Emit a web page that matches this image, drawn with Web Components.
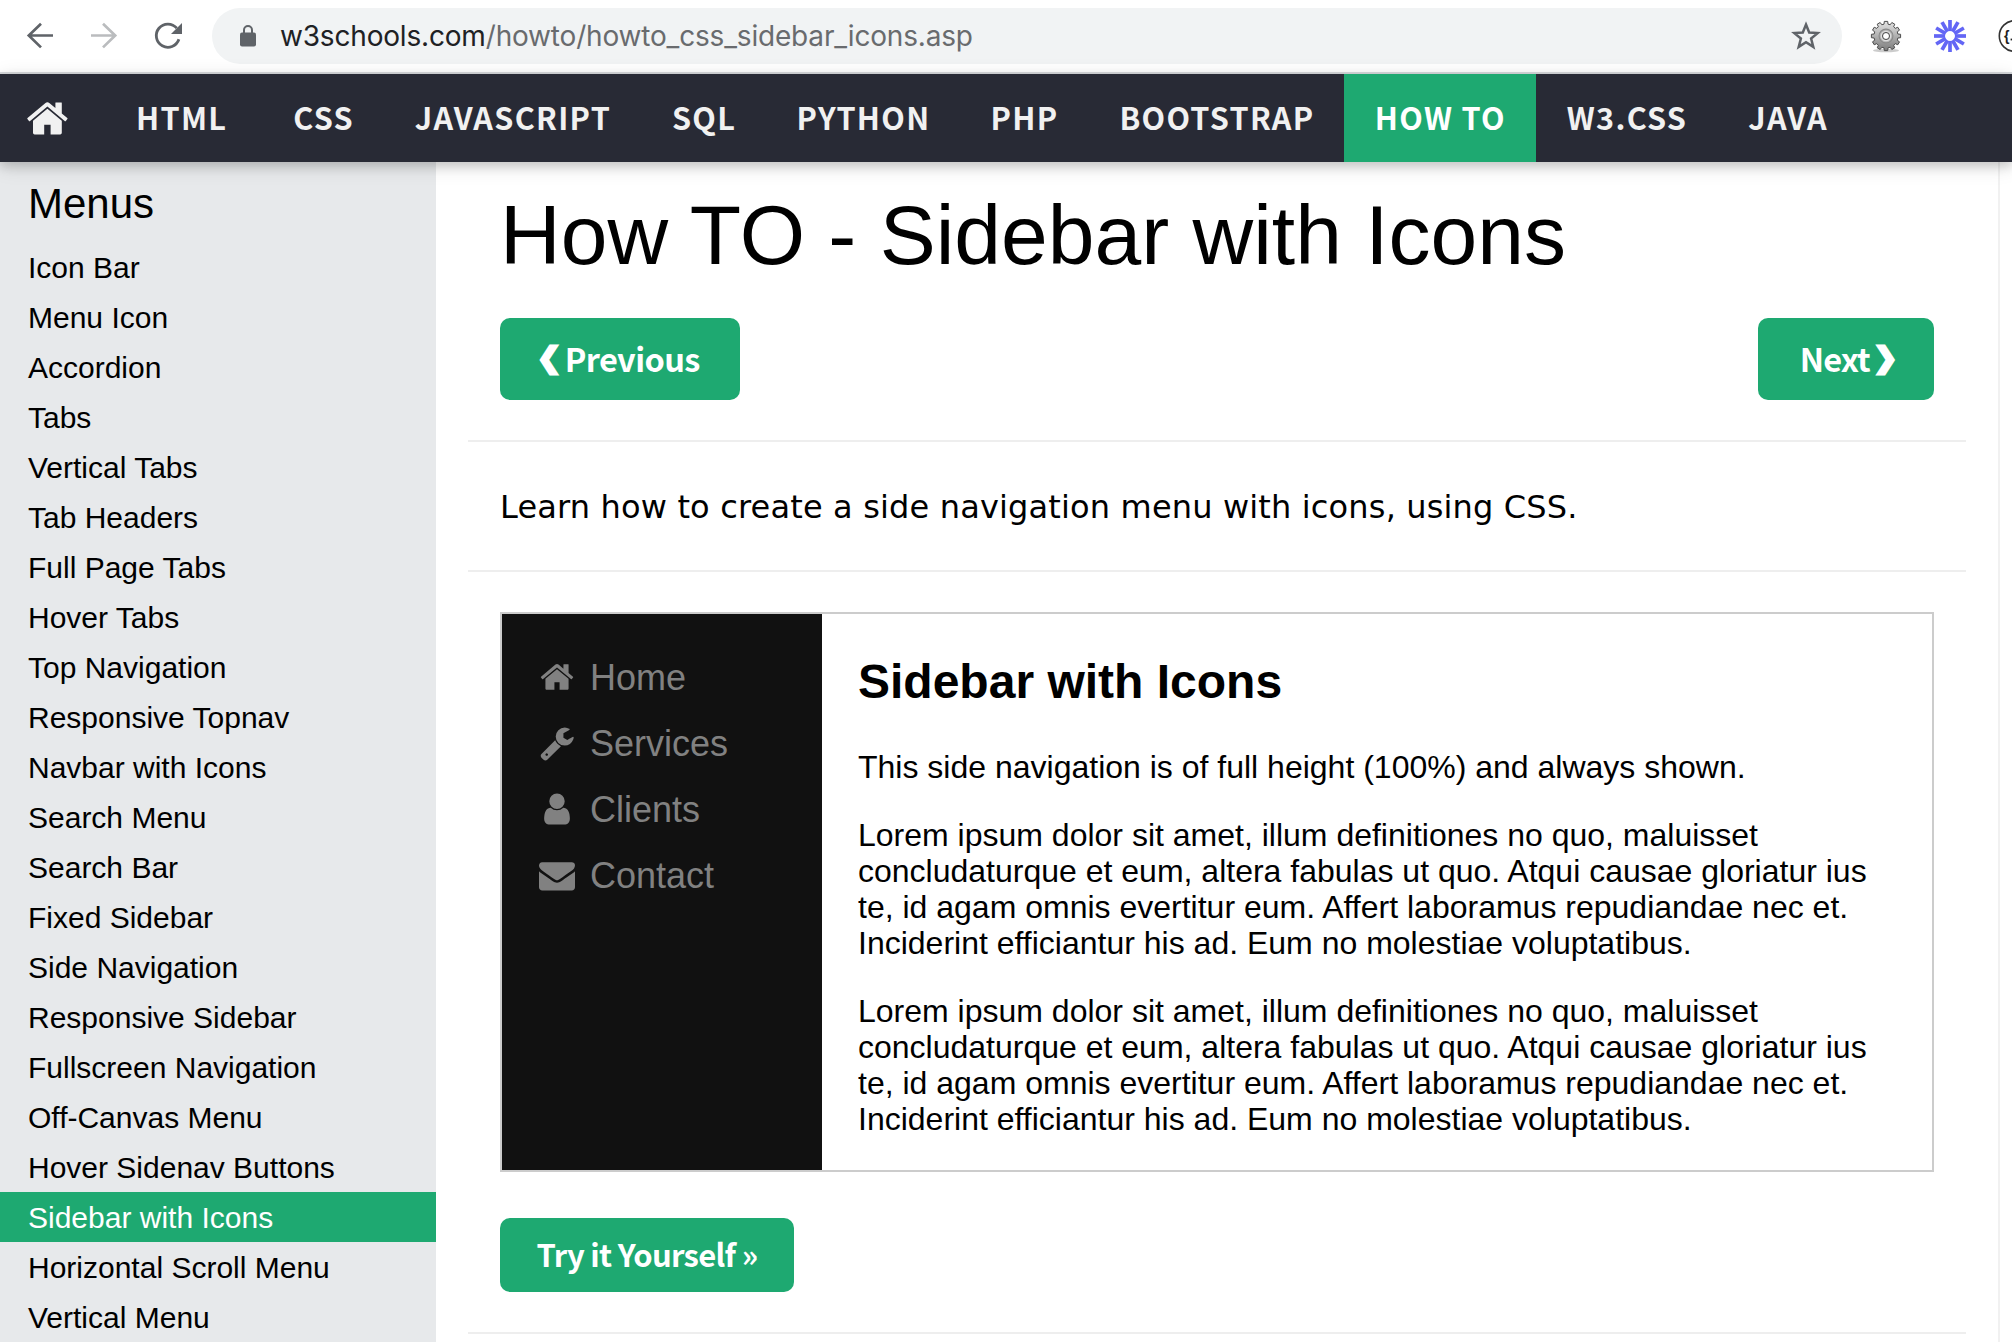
<!DOCTYPE html>
<html lang="en">
<head>
<meta charset="utf-8">
<title>How To Create a Sidebar With Icons</title>
<style>
html, body { margin: 0; height: 1342px; overflow: hidden; background: #fff; }
body { font-family: "Liberation Sans", Arial, sans-serif; color: #000; width: 2012px; }
</style>
</head>
<body>
<page-shell></page-shell>
<script>
const define = (name, html, setup) => customElements.define(name, class extends HTMLElement {
  constructor() {
    super();
    this.attachShadow({ mode: 'open' }).innerHTML = html;
  }
  connectedCallback() { if (setup && !this.ready) { this.ready = true; setup(this, this.shadowRoot); } }
});

const ICONS = {
  home: 'M1472 992v480q0 26-19 45t-45 19h-384v-384h-256v384h-384q-26 0-45-19t-19-45v-480q0-1 .5-3t.5-3l575-474 575 474q1 2 1 6zm223-69l-62 74q-8 9-21 11h-3q-13 0-21-7l-692-577-692 577q-12 8-24 7-13-2-21-11l-62-74q-8-10-7-23.5t11-21.5l719-599q32-26 76-26t76 26l244 204v-195q0-14 9-23t23-9h192q14 0 23 9t9 23v408l219 182q10 8 11 21.5t-7 23.5z',
  wrench: 'M448 1472q0-26-19-45t-45-19-45 19-19 45 19 45 45 19 45-19 19-45zm644-420l-682 682q-37 37-90 37-52 0-91-37l-106-108q-38-36-38-90 0-53 38-91l681-681q39 98 114.5 173.5t173.5 114.5zm634-435q0 39-23 106-47 134-164.5 217.5t-258.5 83.5q-185 0-316.5-131.5t-131.5-316.5 131.5-316.5 316.5-131.5q58 0 121.5 16.5t107.5 46.5q16 11 16 28t-16 28l-293 169v224l193 107q5-3 79-48.5t135.5-81 70.5-35.5q15 0 23.5 10t8.5 25z',
  user: 'M1536 1399q0 109-62.5 187t-150.5 78h-854q-88 0-150.5-78t-62.5-187q0-85 8.5-160.5t31.5-152 58.5-131 94-89 134.5-34.5q131 128 313 128t313-128q76 0 134.5 34.5t94 89 58.5 131 31.5 152 8.5 160.5zm-256-887q0 159-112.5 271.5t-271.5 112.5-271.5-112.5-112.5-271.5 112.5-271.5 271.5-112.5 271.5 112.5 112.5 271.5z',
  envelope: 'M1792 710v794q0 66-47 113t-113 47h-1472q-66 0-113-47t-47-113v-794q44 49 101 87 362 246 497 345 57 42 92.5 65.5t94.5 48 110 24.5h2q51 0 110-24.5t94.5-48 92.5-65.5q170-123 498-345 57-39 100-87zm0-294q0 79-49 151t-122 123q-376 261-468 325-10 7-42.5 31t-54 38.5-52 32.5-57.5 27-50 9h-2q-23 0-50-9t-57.5-27-52-32.5-54-38.5-42.5-31q-91-64-262-182.5t-205-142.5q-62-42-117-115.5t-55-136.5q0-78 41.5-130t118.5-52h1472q65 0 112.5 47t47.5 113z'
};

define('fa-icon', `<style>:host{display:block;flex:none;width:1em;height:1em}svg{display:block;width:100%;height:100%;overflow:visible}</style>
<svg viewBox="0 0 1792 1792" fill="currentColor"><path/></svg>`,
  (el, root) => root.querySelector('path').setAttribute('d', ICONS[el.getAttribute('name')] || ''));

define('browser-toolbar', `<style>
:host{display:flex;height:72px;background:#fff;border-bottom:2px solid #d9dbde;align-items:center;overflow:hidden;color:#5f6368}
svg{display:block;flex:none;overflow:visible}
.nav{display:flex;width:212px;flex:none;padding-left:24px;box-sizing:border-box;gap:32px}
.pill{display:flex;align-items:center;flex:none;box-sizing:border-box;width:1630px;height:56px;border-radius:28px;background:#f1f3f4;padding:0 20px 0 28px}
.url{flex:1;margin-left:24px;font:400 28px/56px Inter,"Liberation Sans",sans-serif;color:#696b6e;letter-spacing:-.18px;white-space:pre}
.url b{font-weight:400;color:#202124}
.ext{display:flex;align-items:center;flex:none;padding-left:26px;gap:30px}
</style>
<div class="nav">
<svg width="32" height="32" viewBox="0 0 32 32" fill="none" stroke="#5f6368" stroke-width="2.7"><path d="M29 15.5H5M17 3.8 4.8 15.5 17 27.4"/></svg>
<svg width="32" height="32" viewBox="0 0 32 32" fill="none" stroke="#babcbe" stroke-width="2.7"><path d="M3 15.5h24M15 3.8 27.2 15.5 15 27.4"/></svg>
<svg width="32" height="32" viewBox="0 0 32 32"><path d="M26.9 19.3A11.6 11.6 0 1 1 24.8 8.2" fill="none" stroke="#5f6368" stroke-width="2.8"/><path d="M30 3v11H19z" fill="#5f6368"/></svg>
</div>
<div class="pill">
<svg width="16" height="22" viewBox="0 0 16 22"><rect y="7.5" width="16" height="14" rx="2" fill="#5f6368"/><path d="M4 9V5a4 4 0 0 1 8 0v4" fill="none" stroke="#5f6368" stroke-width="2"/></svg>
<div class="url"><b>w3schools.com</b>/howto/howto_css_sidebar_icons.asp</div>
<svg width="32" height="32" viewBox="0 0 32 32"><path d="M16 4.5l3.2 8 8.5.6-6.6 5.4 2.2 8.4-7.3-4.7-7.3 4.7 2.2-8.4-6.6-5.4 8.5-.6z" fill="none" stroke="#5f6368" stroke-width="2.5"/></svg>
</div>
<div class="ext">
<svg class="gear" width="36" height="36" viewBox="-18 -18 36 36"><defs><linearGradient id="g" x1="0" y1="0" x2="0" y2="1"><stop offset="0" stop-color="#e4e4e4"/><stop offset="1" stop-color="#7c7c7c"/></linearGradient></defs><ellipse cy="14.5" rx="13" ry="1.8" fill="#ccc"/><g class="teeth"></g><circle r="6.9" fill="#b4b4b4" stroke="#8a8a8a" stroke-width="1.2"/><circle r="4.6" fill="none" stroke="#ddd" stroke-width="1.4"/><circle r="3.5" fill="#fff" stroke="#444"/></svg>
<svg class="burst" width="32" height="32" viewBox="-16 -16 32 32" stroke="#6366f5" stroke-width="3.7"></svg>
<svg width="16" height="36" viewBox="0 0 16 36"><circle cx="18.7" cy="18" r="15.4" fill="#fff" stroke="#333" stroke-width="1.6"/><text x="8" y="22.5" font-family="Liberation Sans, sans-serif" font-size="14" font-weight="700" fill="#222">{</text><rect x="14.6" y="20.6" width="1.8" height="1.8" fill="#222"/></svg>
</div>`, (el, root) => {
  let rays = '';
  for (let i = 0; i < 12; i++) rays += `<path d="M0-4.9V-16" transform="rotate(${i * 30})"/>`;
  root.querySelector('.burst').innerHTML = rays;
  let d = '';
  const n = 12, step = Math.PI * 2 / n;
  for (let i = 0; i < n; i++) {
    const a = i * step - Math.PI / 2;
    for (const [o, r] of [[-.32, 12], [-.22, 14.7], [.22, 14.7], [.32, 12]])
      d += (d ? 'L' : 'M') + (Math.cos(a + o * step) * r).toFixed(2) + ' ' + (Math.sin(a + o * step) * r).toFixed(2);
  }
  root.querySelector('.teeth').innerHTML = `<path d="${d}Z" fill="url(#g)" stroke="#4c4c4c" stroke-width="1"/>`;
});

define('nav-item', `<style>
:host{display:flex;align-items:center;flex:none;height:88px;padding:0 30px 2px 32px;box-sizing:border-box;white-space:nowrap}
:host([active]){background:#1ea971;color:#fff;width:192px;padding-left:31px}
</style><slot></slot>`);

define('top-nav', `<style>
:host{display:flex;position:relative;z-index:2;height:88px;background:#282a35;color:#f1f1f1;box-shadow:0 4px 10px rgba(0,0,0,.16),0 4px 20px rgba(0,0,0,.12);font:700 30.6px/86px "Noto Sans CJK SC",sans-serif;letter-spacing:1.3px}
.home{display:flex;align-items:center;width:104px;padding-left:24.5px;box-sizing:border-box;font-size:44.8px}
.a{margin-right:4px}.b{margin-right:-1.2px}.c{margin-right:-1.2px}.d{margin-right:-1.6px}.e{margin-right:-1.9px}.f{margin-right:-.9px}.g{margin-right:-.7px}.h{margin:0 -1px 0 -1px}
</style>
<div class="home"><fa-icon name="home"></fa-icon></div>
<nav-item class="a">HTML</nav-item><nav-item class="b">CSS</nav-item><nav-item class="c">JAVASCRIPT</nav-item><nav-item class="d">SQL</nav-item><nav-item class="e">PYTHON</nav-item><nav-item class="f">PHP</nav-item><nav-item class="g">BOOTSTRAP</nav-item><nav-item active>HOW TO</nav-item><nav-item class="h">W3.CSS</nav-item><nav-item>JAVA</nav-item>`);

define('side-link', `<style>
:host{display:block;height:50px;line-height:52px;padding-left:28px;white-space:nowrap}
:host([active]){background:#1ea971;color:#fff}
</style><slot></slot>`);

define('side-menu', `<style>
:host{display:block;flex:none;width:436px;background:#e7e9eb;font-size:30px}
h2{margin:0;height:80px;line-height:83px;padding-left:28px;font-size:42px;font-weight:400}
</style><h2>Menus</h2><slot></slot>`);

define('green-button', `<style>
:host{display:flex;align-items:center;justify-content:center;flex:none;box-sizing:border-box;background:#1ea971;color:#fff;border-radius:10px;font:700 32.5px/1 "Noto Sans CJK SC",sans-serif;white-space:pre}
</style><slot></slot>`);

define('rule-line', `<style>:host{display:block;flex:none;height:2px;background:#eee;margin:0 -32px}</style>`);

define('demo-link', `<style>
:host{display:flex;align-items:center;height:66px;line-height:42px;font-size:36px;color:#818181}
.icon{margin:-2px 15px 0 5px}
</style><span class="icon"></span><slot></slot>`, (el, root) => {
  const icon = document.createElement('fa-icon');
  icon.setAttribute('name', el.getAttribute('icon'));
  root.querySelector('.icon').append(icon);
});

define('demo-frame', `<style>
:host{display:flex;box-sizing:border-box;height:560px;border:2px solid #ccc}
.side{width:320px;flex:none;background:#111;padding:31px 0 0 32px;box-sizing:border-box}
.body{flex:1;padding:0 36px;font-size:32px;line-height:36px;white-space:nowrap}
h2{margin:40px 0 0;font-size:48px;line-height:55px;font-weight:700}
p{margin:0 0 32px}
h2+p{margin-top:40px}
</style>
<div class="side"><demo-link icon="home">Home</demo-link><demo-link icon="wrench">Services</demo-link><demo-link icon="user">Clients</demo-link><demo-link icon="envelope">Contact</demo-link></div>
<div class="body"><h2>Sidebar with Icons</h2>
<p>This side navigation is of full height (100%) and always shown.</p>
<p>Lorem ipsum dolor sit amet, illum definitiones no quo, maluisset<br>concludaturque et eum, altera fabulas ut quo. Atqui causae gloriatur ius<br>te, id agam omnis evertitur eum. Affert laboramus repudiandae nec et.<br>Inciderint efficiantur his ad. Eum no molestiae voluptatibus.</p>
<p>Lorem ipsum dolor sit amet, illum definitiones no quo, maluisset<br>concludaturque et eum, altera fabulas ut quo. Atqui causae gloriatur ius<br>te, id agam omnis evertitur eum. Affert laboramus repudiandae nec et.<br>Inciderint efficiantur his ad. Eum no molestiae voluptatibus.</p></div>`);

define('main-content', `<style>
:host{display:flex;flex-direction:column;box-sizing:border-box;width:1564px;padding:0 64px;border-right:2px solid #f1f1f1;background:#fff;overflow:hidden}
h1{margin:24px 0 0;height:96px;line-height:98px;font-size:84px;font-weight:400;white-space:nowrap}
.pager{display:flex;justify-content:space-between;margin:36px 0 40px}
.pager green-button{height:82px;padding-bottom:2px}
.prev{width:240px;letter-spacing:-.6px}.pager .next{width:176px;letter-spacing:-.9px;padding-left:3px}
.arrow{font-family:"DejaVu Sans",sans-serif;font-size:28px;-webkit-text-stroke:3px #fff;letter-spacing:0}
.prev .arrow{margin:0 4px 0 -3px}.next .arrow{margin:0 -2px 0 4px}
.intro{margin:0;height:128px;line-height:130px;font-family:"DejaVu Sans",sans-serif;font-size:32px;letter-spacing:.16px;white-space:nowrap}
demo-frame{margin-top:40px}
.try{width:294px;height:74px;margin:46px 0 40px;padding-bottom:4px;font-size:31px;letter-spacing:-.7px}
</style>
<h1>How TO - Sidebar with Icons</h1>
<div class="pager"><green-button class="prev"><span class="arrow">❮</span>Previous</green-button><green-button class="next">Next<span class="arrow">❯</span></green-button></div>
<rule-line></rule-line>
<p class="intro">Learn how to create a side navigation menu with icons, using CSS.</p>
<rule-line></rule-line>
<demo-frame></demo-frame>
<green-button class="try">Try it Yourself »</green-button>
<rule-line></rule-line>`);

define('page-shell', `<style>
:host{display:flex;flex-direction:column;width:2012px;height:1342px;overflow:hidden}
browser-toolbar,top-nav{flex:none}
.row{display:flex;height:1180px;overflow:hidden}
</style>
<browser-toolbar></browser-toolbar>
<top-nav></top-nav>
<div class="row"><side-menu></side-menu><main-content></main-content></div>`, (el, root) => {
  const names = ['Icon Bar', 'Menu Icon', 'Accordion', 'Tabs', 'Vertical Tabs', 'Tab Headers', 'Full Page Tabs', 'Hover Tabs', 'Top Navigation', 'Responsive Topnav', 'Navbar with Icons', 'Search Menu', 'Search Bar', 'Fixed Sidebar', 'Side Navigation', 'Responsive Sidebar', 'Fullscreen Navigation', 'Off-Canvas Menu', 'Hover Sidenav Buttons', 'Sidebar with Icons', 'Horizontal Scroll Menu', 'Vertical Menu'];
  const menu = root.querySelector('side-menu');
  for (const name of names) {
    const link = document.createElement('side-link');
    link.textContent = name;
    if (name === 'Sidebar with Icons') link.setAttribute('active', '');
    menu.append(link);
  }
});
</script>
</body>
</html>
